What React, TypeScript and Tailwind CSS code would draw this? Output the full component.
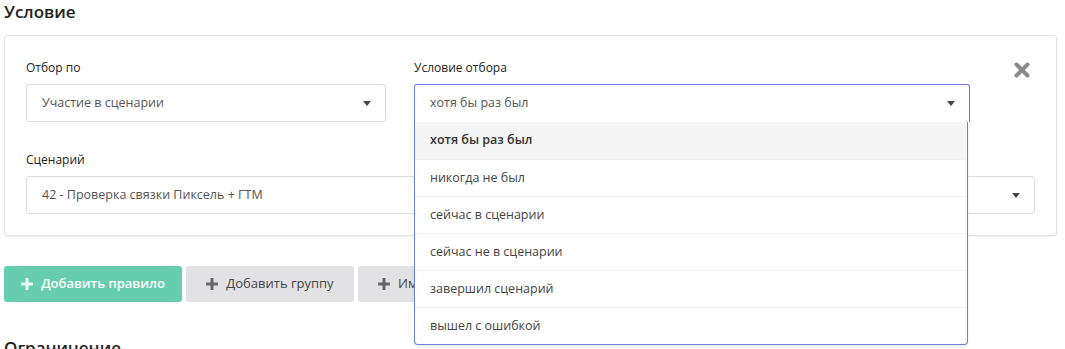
import { useState } from 'react';

const options = [
  'хотя бы раз был',
  'никогда не был',
  'сейчас в сценарии',
  'сейчас не в сценарии',
  'завершил сценарий',
  'вышел с ошибкой',
];

function Caret() {
  return (
    <svg width="8" height="5" viewBox="0 0 8 5" className="shrink-0">
      <path d="M0 0h8L4 5z" fill="#444" />
    </svg>
  );
}

function Plus({ color }: { color: string }) {
  return (
    <svg width="12" height="12" viewBox="0 0 12 12" className="shrink-0">
      <path d="M4.5 0h3v4.5H12v3H7.5V12h-3V7.5H0v-3h4.5z" fill={color} />
    </svg>
  );
}

export default function App() {
  const [value] = useState(options[0]);

  return (
    <div className="min-h-screen bg-white px-[4px] text-[#333]" style={{ fontFamily: '"Open Sans", "Noto Sans", sans-serif' }}>
      <h2 className="pt-[1px] text-[17px] font-semibold leading-[22px] text-[#222]">Условие</h2>

      {/* Condition card */}
      <div className="mt-[12px] w-[1053px] rounded-[3px] border border-[#e2e2e2] px-[21px] pt-[24px] pb-[21px] shadow-[0_1px_2px_rgba(0,0,0,0.06)]">
        <div className="flex">
          <div className="w-[360px]">
            <div className="text-[12px] font-medium leading-[16px] text-[#222]">Отбор по</div>
            <div className="mt-[8px] flex h-[38px] items-center justify-between rounded-[3px] border border-[#dedede] pl-[15px] pr-[14px] text-[12.5px] text-[#555]">
              <span>Участие в сценарии</span>
              <Caret />
            </div>
          </div>

          <div className="relative ml-[28px] w-[556px]">
            <div className="text-[12px] font-medium leading-[16px] text-[#222]">Условие отбора</div>
            <div className="mt-[8px] flex h-[38px] items-center justify-between rounded-t-[3px] border border-b-0 border-[#6b7fe0] pl-[15px] pr-[14px] text-[12.5px] text-[#555]">
              <span>{value}</span>
              <Caret />
            </div>
            <ul className="absolute left-0 top-[62px] z-10 w-[554px] rounded-b-[4px] border border-t-0 border-[#6b7fe0] bg-white shadow-[0_2px_3px_rgba(0,0,0,0.08)]">
              {options.map((o, i) => (
                <li
                  key={o}
                  className={
                    i === 0
                      ? 'flex h-[37px] items-center bg-[#f5f5f5] pl-[15px] text-[12.5px] font-semibold text-[#333]'
                      : 'flex h-[37px] items-center border-t border-[#f1f1f1] pl-[15px] text-[12.5px] text-[#444]'
                  }
                >
                  {o}
                </li>
              ))}
            </ul>
          </div>

          <div className="flex flex-1 items-start justify-end pr-[5px] pt-[2px]">
            <svg width="16" height="16" viewBox="0 0 16 16">
              <path d="M2.5 2.5l11 11M13.5 2.5l-11 11" stroke="#8a8a8a" strokeWidth="4" strokeLinecap="round" />
            </svg>
          </div>
        </div>

        <div className="mt-[30px]">
          <div className="text-[12px] font-medium leading-[16px] text-[#222]">Сценарий</div>
          <div className="mt-[8px] flex h-[38px] items-center justify-between rounded-[3px] border border-[#dedede] pl-[15px] pr-[14px] text-[12.5px] text-[#555]">
            <span>42 - Проверка связки Пиксель + ГТМ</span>
            <Caret />
          </div>
        </div>
      </div>

      {/* Buttons */}
      <div className="mt-[30px] flex gap-[4px]">
        <button className="flex h-[36px] w-[178px] items-center justify-center gap-[8px] rounded-[3px] bg-[#66cdae] text-[13px] font-semibold text-white">
          <Plus color="#e6f7f1" />
          Добавить правило
        </button>
        <button className="flex h-[36px] w-[168px] items-center justify-center gap-[8px] rounded-[3px] bg-[#e2e2e4] text-[13px] text-[#444]">
          <Plus color="#666" />
          Добавить группу
        </button>
        <button className="flex h-[36px] w-[200px] items-center justify-start gap-[8px] rounded-[3px] bg-[#e2e2e4] pl-[20px] text-[13px] text-[#444]">
          <Plus color="#666" />
          Импорт
        </button>
      </div>

      <h2 className="mt-[35px] text-[17px] font-semibold leading-[22px] text-[#222]">Ограничение</h2>
    </div>
  );
}
